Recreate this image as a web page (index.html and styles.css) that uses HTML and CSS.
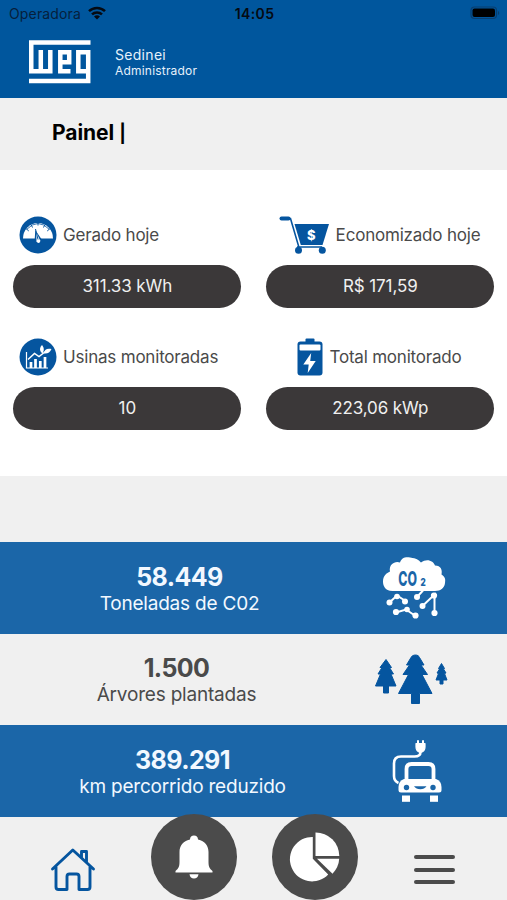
FILE: index.html
```html
<!DOCTYPE html>
<html lang="pt-BR">
<head>
    <meta charset="UTF-8">
    <meta name="viewport" content="width=device-width, initial-scale=1.0">
    <title>Painel</title>
    <link rel="stylesheet" href="styles.css">
</head>
<body>
    <div class="app">
        <header class="header">
            <div class="status-bar">
                <div class="carrier">
                    <span class="carrier-name">Operadora</span>
                    <svg class="wifi" width="18" height="14" viewBox="0 0 18 14">
                        <g fill="none" stroke="#050a12" stroke-width="2.5">
                            <path d="M1 5.2a11.6 11.6 0 0 1 16 0"/>
                            <path d="M4 8.4a7.3 7.3 0 0 1 10 0"/>
                        </g>
                        <path d="M9 13.6L6 10.6a4.4 4.4 0 0 1 6 0z" fill="#050a12"/>
                    </svg>
                </div>
                <span class="clock">14:05</span>
                <svg class="battery" width="30" height="14" viewBox="0 0 30 14">
                    <rect x="1" y="1" width="25.5" height="11.5" rx="3.5" fill="none" stroke="#083f70" stroke-width="1.2"/>
                    <rect x="2.5" y="2.5" width="22.5" height="8.6" rx="2" fill="#000"/>
                    <path d="M28 5v4a2.2 2.2 0 0 0 0-4z" fill="#083f70"/>
                </svg>
            </div>
            <div class="user-bar">
                <svg class="logo" width="62" height="44" viewBox="0 0 62 44">
                    <g fill="none" stroke="#fff" stroke-width="4.5">
                        <path d="M61.5 2.6H2.25V31.2H21.3V10M11.8 10V31"/>
                        <path d="M41.5 31.2H31.3V12.3H40.2V22.3H32"/>
                        <path d="M57.5 31.2H49.3V12.3H59.2V40.9H0"/>
                    </g>
                </svg>
                <div class="user-info">
                    <div class="user-name">Sedinei</div>
                    <div class="user-role">Administrador</div>
                </div>
            </div>
        </header>

        <div class="page-title">
            <h1>Painel <span class="bar">|</span></h1>
        </div>

        <section class="cards">
            <div class="card">
                <div class="card-label">
                    <svg width="38" height="38" viewBox="0 0 38 38">
                        <circle cx="19" cy="19" r="18.5" fill="#05559f"/>
                        <path d="M4 22.5a15 15.5 0 1 1 30 0z" fill="#fff"/>
                        <path d="M7.5 13.5Q19 1.5 30.5 13.5" fill="none" stroke="#05559f" stroke-width=".8"/>
                        <path d="M7.5 13l2.300 2M12.3 9l1.200 2.500M19 7v2.500M25.7 9l-1.200 2.500M30.5 13l-2.300 2" stroke="#05559f" stroke-width="1"/>
                        <path d="M16.3 14l-.6 9.500a3.600 3.600 0 1 0 6-1.500z" fill="#05559f"/>
                        <path d="M17.2 16l.3 8a2 2 0 1 0 3-.8z" fill="#fff"/>
                        <path d="M16.5 13l2.500 10.500" stroke="#05559f" stroke-width="1"/>
                    </svg>
                    <span>Gerado hoje</span>
                </div>
                <div class="card-value">311.33 kWh</div>
            </div>

            <div class="card card-center">
                <div class="card-label">
                    <svg width="51" height="38" viewBox="0 0 51 38">
                        <path d="M2.5 2.5h7" stroke="#05559f" stroke-width="4" stroke-linecap="round"/>
                        <path d="M9 2.500h2.500L20 31.500v3M18 31h25" fill="none" stroke="#05559f" stroke-width="1.6"/>
                        <path d="M15.500 8H50l-6.500 21H21.800z" fill="#05559f"/>
                        <circle cx="19.5" cy="34.3" r="3.5" fill="#05559f"/>
                        <circle cx="43.3" cy="34.3" r="3.5" fill="#05559f"/>
                        <text class="cart-symbol" x="32.3" y="23.5" text-anchor="middle">$</text>
                    </svg>
                    <span>Economizado hoje</span>
                </div>
                <div class="card-value">R$ 171,59</div>
            </div>

            <div class="card">
                <div class="card-label">
                    <svg width="38" height="38" viewBox="0 0 38 38">
                        <circle cx="19" cy="19" r="18.5" fill="#05559f"/>
                        <path d="M7.5 14v16H29" fill="none" stroke="#fff" stroke-width="1.2"/>
                        <path d="M12 30v-6M16.5 30v-9M21.3 30v-7M26 30V19" stroke="#fff" stroke-width="2.7"/>
                        <path d="M9 21.5l6.500-6 4.500 3 6.500-5" fill="none" stroke="#fff" stroke-width="1.5"/>
                        <path d="M23.5 15.500c-3.500-2.500-3-6-.5-8.500 2 2.500 2.500 5 .5 8.500z" fill="#fff"/>
                        <path d="M25 15.500c0-4 3-5.500 7.500-4.500-1.500 3.500-4 5-7.500 4.500z" fill="#fff"/>
                    </svg>
                    <span>Usinas monitoradas</span>
                </div>
                <div class="card-value">10</div>
            </div>

            <div class="card card-center">
                <div class="card-label">
                    <svg width="26" height="38" viewBox="0 0 26 38">
                        <rect x="8.5" y="0.5" width="9" height="5" rx="1" fill="#05559f"/>
                        <rect x="0.5" y="3.5" width="25" height="34" rx="3" fill="#05559f"/>
                        <rect x="2.5" y="6.5" width="21" height="6" rx="1" fill="#fff"/>
                        <path d="M14.2 15L6.300 26.500h5.400L10.700 35l8-12h-5.500z" fill="#fff"/>
                    </svg>
                    <span>Total monitorado</span>
                </div>
                <div class="card-value">223,06 kWp</div>
            </div>
        </section>

        <section class="stats">
            <div class="stat stat-blue">
                <div class="stat-text stat-co">
                    <div class="stat-value">58.449</div>
                    <div class="stat-label">Toneladas de C02</div>
                </div>
                <svg class="stat-icon" width="80" height="80" viewBox="0 0 80 80">
                    <path d="M17 42C9 42 7.500 36 7.500 32.500 7.500 27 11 24 14.500 22.500 13 15 20 11.500 24.500 13.500 27 6 34 8.500 37 9c5 .5 7 3 8.500 4.500 6-4.500 12.500-1.500 14 3 6 0 7.500 4.500 6.500 9 4 3 4 5 3.500 8.500-.5 4.500-4 8-10 8z" fill="#fff" transform="translate(-.5 1)"/>
                    <text class="co-text" transform="translate(22.3 37.7) scale(.6 1)">CO</text>
                    <text class="co-sub" transform="translate(44.5 38) scale(.8 1)">2</text>
                    <g transform="translate(0 .5)">
                        <g fill="none" stroke="#fff" stroke-width="2">
                            <path d="M14 53.500l7-6.500 8.500 5.500M20 64l10-3 9.500 6.500M41 48.500l6-6.500M47 57l11.500-11v18M55 46.500h6"/>
                        </g>
                        <g fill="#fff">
                            <circle cx="13.5" cy="54" r="3"/>
                            <circle cx="21" cy="48" r="2.8"/>
                            <circle cx="29" cy="53" r="3"/>
                            <circle cx="20" cy="63.5" r="3.1"/>
                            <circle cx="31" cy="61" r="2.8"/>
                            <circle cx="39.5" cy="67" r="3.1"/>
                            <circle cx="41" cy="48.5" r="3"/>
                            <circle cx="46.500" cy="57.5" r="3"/>
                            <circle cx="58" cy="47" r="3.1"/>
                            <circle cx="58.5" cy="64.5" r="3.1"/>
                        </g>
                    </g>
                </svg>
            </div>

            <div class="stat stat-gray">
                <div class="stat-text stat-trees">
                    <div class="stat-value">1.500</div>
                    <div class="stat-label">Árvores plantadas</div>
                </div>
                <svg class="stat-icon" width="80" height="62" viewBox="0 0 80 62">
                    <g fill="#05559f" stroke="#05559f" stroke-width="1" stroke-linejoin="round">
                        <path d="M39.500 7c2 0 3.500 1 4 2.500l4.500 7.500h-3l6.500 9.500h-5.500l10 19H43.500v10h-8v-10H22.500l10-19h-5.500l6.500-9.500h-3l4.500-7.500c.5-1.500 2.500-2.500 4.500-2.500z"/>
                        <path d="M10 11.500l5.500 8h-2l4 6.500h-2.500l5 12h-7.500v7h-5v-7H-.5l5-12H2l4-6.500H4z"/>
                        <path d="M65.500 15.500l3 5-1 .5 2.500 4-1.500.5 2.500 6.500h-4v4h-3v-4h-4l2.500-6.500-1.500-.5 2.500-4-1-.5z"/>
                    </g>
                </svg>
            </div>

            <div class="stat stat-blue">
                <div class="stat-text stat-car">
                    <div class="stat-value">389.291</div>
                    <div class="stat-label">km percorrido reduzido</div>
                </div>
                <svg class="stat-icon" width="80" height="82" viewBox="0 0 80 82">
                    <path d="M28.5 53c-3.500-1.500-4.500-3.500-4.500-7V33.500q0-7 7-7H44.500q6 0 6-4.500" fill="none" stroke="#fff" stroke-width="2.6"/>
                    <path d="M46 13.500h9v3.500q0 4.500-4.500 5.500Q46 21.500 46 17z" fill="#fff" stroke="#fff" stroke-width="1.2" stroke-linejoin="round"/>
                    <path d="M48 13v-2.700M53 13v-2.700" stroke="#fff" stroke-width="2"/>
                    <path d="M36.500 50.500V39q0-5 5-5h17q5 0 5 5v11.500" fill="none" stroke="#fff" stroke-width="3.8"/>
                    <path d="M34 49h32q5.500 2 5.500 8v3q0 2.500-2.500 2.500H31q-2.500 0-2.500-2.500v-3q0-6 5.500-8z" fill="#fff"/>
                    <rect x="32" y="65.5" width="8" height="6.3" fill="#fff"/>
                    <rect x="60" y="65.5" width="8" height="6.3" fill="#fff"/>
                    <circle cx="36.5" cy="57.5" r="2.7" fill="#1b66a8"/>
                    <circle cx="63" cy="57.5" r="2.7" fill="#1b66a8"/>
                    <path d="M44 56.300h12.500q-2 3-6.200 3T44 56.300z" fill="#1b66a8"/>
                </svg>
            </div>
        </section>

        <nav class="tab-bar">
            <a class="tab" href="#">
                <svg class="home-icon" width="46" height="44" viewBox="0 0 46 44">
                    <g fill="none" stroke="#05559f" stroke-width="2.9" stroke-linejoin="round" stroke-linecap="round">
                        <path d="M2.500 21L22.800 2 43.500 21M6 19v20q0 2.500 2.500 2.500H17V28.500q0-2.500 2.500-2.500h7q2.500 0 2.500 2.500v13h8.500q2.500 0 2.500-2.500V19"/>
                        <path d="M31.500 9V3.500h5V13.500"/>
                    </g>
                </svg>
            </a>
            <a class="tab tab-round" href="#">
                <svg width="38" height="44" viewBox="0 0 38 44">
                    <path d="M19 .5c2.300 0 4 1.500 4 4 7 1.500 10.500 6.500 10.500 12.500v10c0 4.500 1 6.500 4 9v1.500H.5V36c3-2.500 4-4.500 4-9V17C4.500 11 8 6 15 4.500 15 2 16.700.5 19 .5z" fill="#fff"/>
                    <path d="M14.500 39.300h9c-.5 3-2 4.200-4.500 4.200s-4-1.200-4.500-4.200z" fill="#fff"/>
                </svg>
            </a>
            <a class="tab tab-round" href="#">
                <svg width="50" height="50" viewBox="0 0 50 50">
                    <path d="M22.800 5V26.800L38.200 42.500A22.200 22.200 0 1 1 22.800 5z" fill="#fff"/>
                    <path d="M25.500.5a23.500 23.500 0 0 1 23.800 23.500H25.500z" fill="#fff"/>
                    <path d="M27 26.800h22.200q-.5 8.500-6.700 15z" fill="#fff"/>
                </svg>
            </a>
            <a class="tab" href="#">
                <div class="menu-icon">
                    <span></span>
                    <span></span>
                    <span></span>
                </div>
            </a>
        </nav>
    </div>
</body>
</html>
```
FILE: styles.css
```css
* {
    margin: 0;
    padding: 0;
    box-sizing: border-box;
}

body {
    font-family: 'Inter', 'Roboto', sans-serif;
    background: #fff;
    color: #4a4a4a;
}

svg {
    display: block;
    flex-shrink: 0;
    overflow: visible;
}

.app {
    width: 507px;
    height: 900px;
    overflow: hidden;
    display: flex;
    flex-direction: column;
}

.header {
    height: 98px;
    background: #00569d;
}

.status-bar {
    height: 28px;
    padding: 0 7px 2px 9px;
    display: grid;
    grid-template-columns: 1fr auto 1fr;
    align-items: center;
    color: #050a12;
    font-size: 14px;
}

.carrier {
    display: flex;
    align-items: center;
    gap: 7px;
}

.carrier-name {
    letter-spacing: 0.15px;
    color: #06203c;
}

.wifi {
    margin-top: -1px;
}

.clock {
    font-weight: 600;
    letter-spacing: 0.4px;
}

.battery {
    justify-self: end;
}

.user-bar {
    display: flex;
    padding: 12px 29px 0;
    gap: 24px;
    color: #e6f1fb;
}

.user-info {
    padding-top: 6px;
}

.user-name {
    font-size: 14px;
    line-height: 18px;
    letter-spacing: 0.3px;
}

.user-role {
    font-size: 12px;
    line-height: 14px;
    letter-spacing: 0.2px;
}

.page-title {
    height: 72px;
    padding: 20px 52px;
    background: #f0f0f0;
    color: #000;
}

.page-title h1 {
    font-size: 21px;
    line-height: 29px;
    font-weight: 700;
    letter-spacing: -0.05px;
}

.page-title .bar {
    font-size: 18px;
}

.cards {
    height: 306px;
    padding: 46px 13px 0;
    display: grid;
    grid-template-columns: 1fr 1fr;
    grid-auto-rows: 92px;
    gap: 30px 25px;
    background: #fff;
}

.card-label {
    display: flex;
    align-items: center;
    gap: 6px;
    height: 38px;
    padding-left: 6px;
    font-size: 17px;
    letter-spacing: -0.2px;
    white-space: nowrap;
}

.card-center .card-label {
    justify-content: center;
    padding: 0 1px 0 0;
}

.card-value {
    height: 43px;
    margin: 11.3px -0.3px 0 0.3px;
    border-radius: 22px;
    background: #3b3839;
    color: #f0f0f0;
    font-size: 17px;
    line-height: 43px;
    letter-spacing: -0.1px;
    text-align: center;
}

.cart-symbol {
    fill: #fff;
    font-size: 13px;
    font-weight: 800;
}

.stats {
    padding-top: 66px;
    background: #f0f0f0;
}

.stat {
    height: 91.67px;
    display: flex;
    align-items: center;
}

.stat-text {
    padding-top: 3px;
    text-align: center;
}

.stat-co {
    width: 359px;
    margin-right: 17px;
}

.stat-trees {
    width: 353px;
    margin-right: 22.5px;
}

.stat-car {
    width: 365px;
    margin-right: 5px;
}

.stat-blue {
    background: #1b66a8;
    color: #f2f8ff;
}

.stat-gray {
    color: #4a4a4a;
}

.stat-value {
    font-size: 25px;
    line-height: 28px;
    font-weight: 700;
    letter-spacing: -0.6px;
}

.stat-label {
    font-size: 19px;
    line-height: 25px;
    letter-spacing: -0.2px;
}

.co-text {
    fill: #1b66a8;
    font-size: 20.5px;
    font-weight: 800;
}

.co-sub {
    fill: #1b66a8;
    font-size: 10px;
    font-weight: 900;
}

.tab-bar {
    height: 83px;
    padding: 0 14px;
    display: grid;
    grid-template-columns: repeat(4, 1fr);
    justify-items: center;
    background: #f0f0f0;
}

.tab {
    display: flex;
    align-items: center;
    justify-content: center;
    padding-top: 22px;
}

.home-icon {
    margin-right: 2px;
}

.tab-round {
    width: 86px;
    height: 86px;
    margin-top: -2.5px;
    padding: 0;
    border-radius: 50%;
    background: #4b4b4b;
}

.tab-round + .tab-round {
    margin-left: 3px;
}

.menu-icon {
    display: flex;
    flex-direction: column;
    gap: 8.3px;
    margin-left: 2px;
}

.menu-icon span {
    width: 41px;
    height: 4px;
    border-radius: 2px;
    background: #4b4b4b;
}
```
